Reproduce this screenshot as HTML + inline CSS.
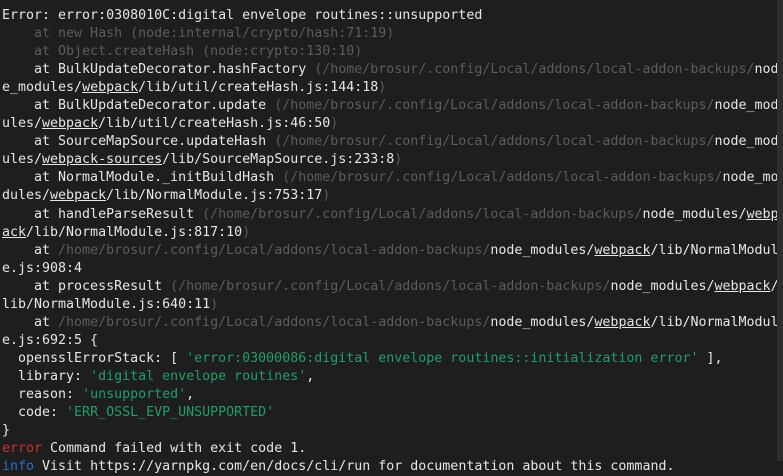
<!DOCTYPE html>
<html><head><meta charset="utf-8"><style>
html,body{margin:0;padding:0;width:783px;height:461px;overflow:hidden;background:#1e1e1e}
pre{margin:0;position:absolute;left:2px;top:7px;font-family:"DejaVu Sans Mono","Liberation Mono",monospace;font-size:13.3px;line-height:18.05px;color:#e6e6e6;white-space:pre}
.g{color:#5c5c5c}.s{color:#1f9e6a}.r{color:#cd3131}.u{text-decoration:underline}.b{color:#2472c8}
.sb{position:absolute;right:0;top:0;width:6px;height:461px;background:#2e2e2e}
</style></head><body>
<pre>Error: error:0308010C:digital envelope routines::unsupported
<span class="g">    at new Hash (node:internal/crypto/hash:71:19)</span>
<span class="g">    at Object.createHash (node:crypto:130:10)</span>
    at BulkUpdateDecorator.hashFactory <span class="g">(/home/brosur/.config/Local/addons/local-addon-backups/</span>nod
e_modules/<span class="u">webpack</span>/lib/util/createHash.js:144:18<span class="g">)</span>
    at BulkUpdateDecorator.update <span class="g">(/home/brosur/.config/Local/addons/local-addon-backups/</span>node_mod
ules/<span class="u">webpack</span>/lib/util/createHash.js:46:50<span class="g">)</span>
    at SourceMapSource.updateHash <span class="g">(/home/brosur/.config/Local/addons/local-addon-backups/</span>node_mod
ules/<span class="u">webpack-sources</span>/lib/SourceMapSource.js:233:8<span class="g">)</span>
    at NormalModule._initBuildHash <span class="g">(/home/brosur/.config/Local/addons/local-addon-backups/</span>node_mo
dules/<span class="u">webpack</span>/lib/NormalModule.js:753:17<span class="g">)</span>
    at handleParseResult <span class="g">(/home/brosur/.config/Local/addons/local-addon-backups/</span>node_modules/<span class="u">webp</span>
<span class="u">ack</span>/lib/NormalModule.js:817:10<span class="g">)</span>
    at <span class="g">/home/brosur/.config/Local/addons/local-addon-backups/</span>node_modules/<span class="u">webpack</span>/lib/NormalModul
e.js:908:4
    at processResult <span class="g">(/home/brosur/.config/Local/addons/local-addon-backups/</span>node_modules/<span class="u">webpack</span>/
lib/NormalModule.js:640:11<span class="g">)</span>
    at <span class="g">/home/brosur/.config/Local/addons/local-addon-backups/</span>node_modules/<span class="u">webpack</span>/lib/NormalModul
e.js:692:5 {
  opensslErrorStack: [ <span class="s">'error:03000086:digital envelope routines::initialization error'</span> ],
  library: <span class="s">'digital envelope routines'</span>,
  reason: <span class="s">'unsupported'</span>,
  code: <span class="s">'ERR_OSSL_EVP_UNSUPPORTED'</span>
}
<span class="r">error</span> Command failed with exit code 1.
<span class="b">info</span> Visit https://yarnpkg.com/en/docs/cli/run for documentation about this command.</pre>
<div class="sb"></div>
</body></html>
